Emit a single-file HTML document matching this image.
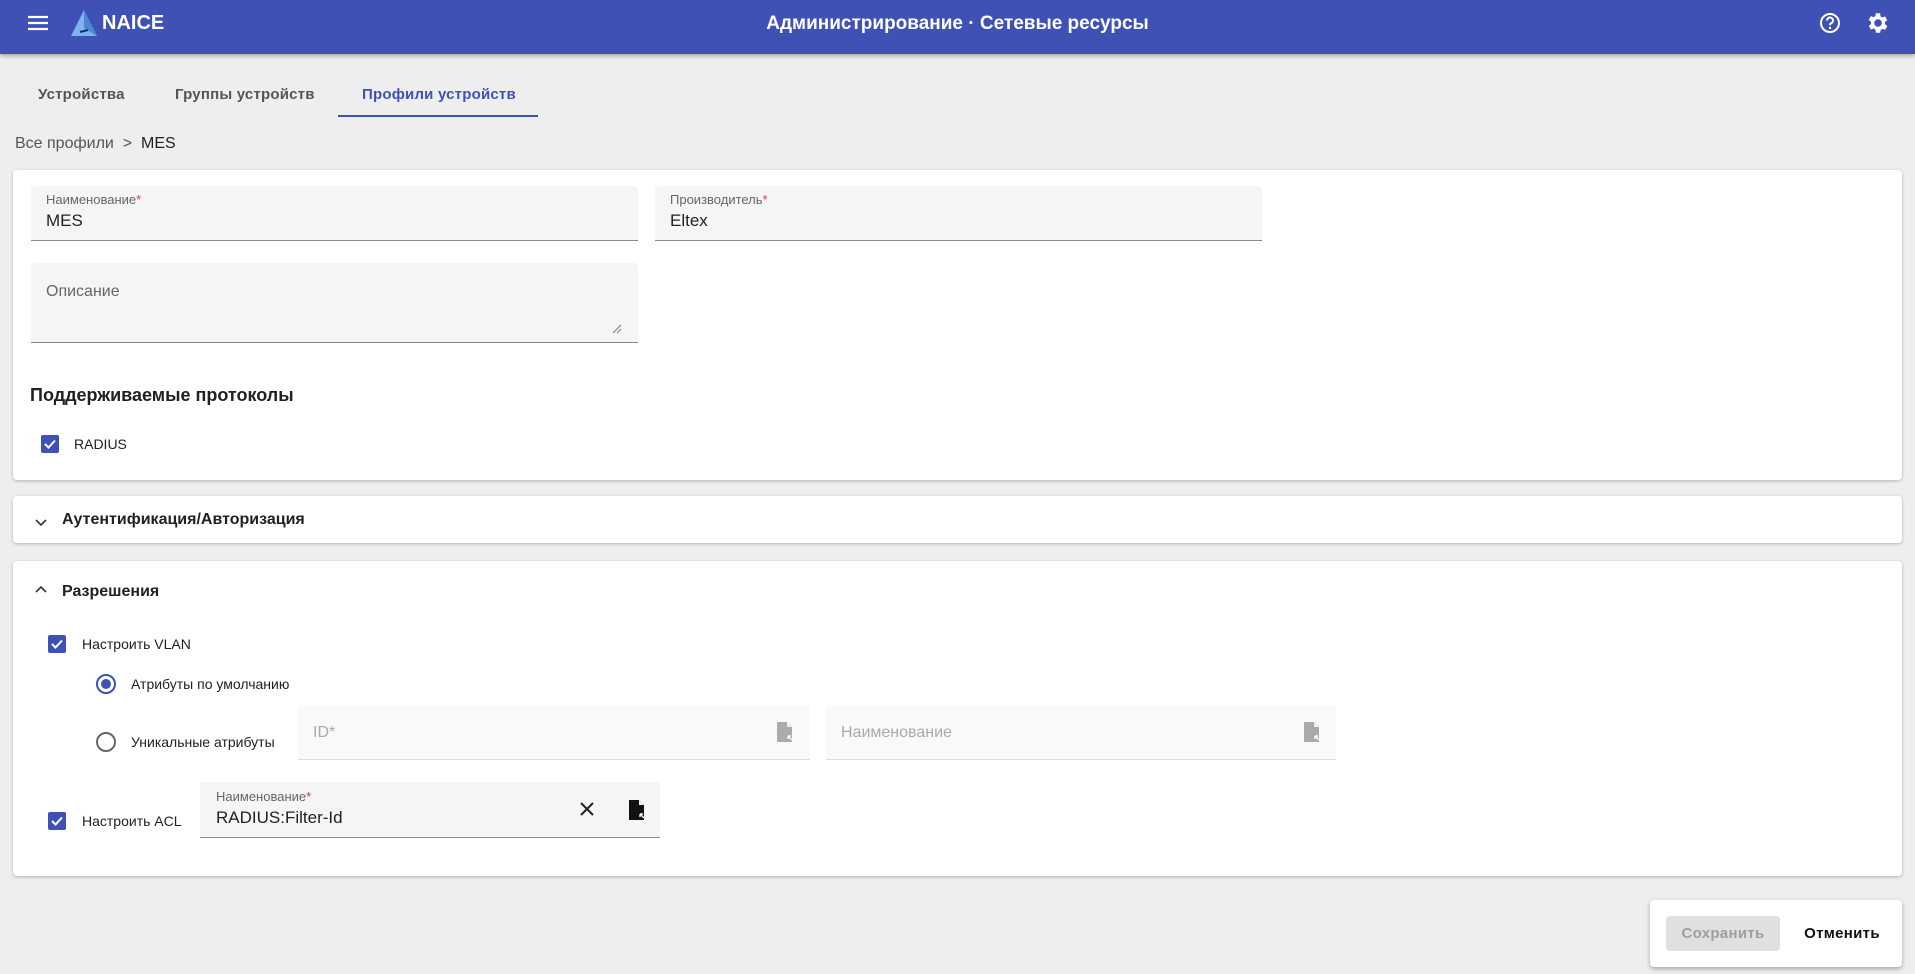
<!DOCTYPE html>
<html><head><meta charset="utf-8"><style>
*{box-sizing:border-box;margin:0;padding:0}
body{width:1915px;height:974px;background:#eeeeee;font-family:"Liberation Sans",sans-serif;color:#212121;position:relative;overflow:hidden}
.a{position:absolute}
.hdr{left:0;top:0;width:1915px;height:54px;background:#3f51b5;box-shadow:0 2px 4px rgba(0,0,0,.3)}
.card{background:#fff;border-radius:4px;box-shadow:0 1px 3px rgba(0,0,0,.25)}
.fld{background:#f5f5f5;border-bottom:1px solid #8a8a8a;border-radius:4px 4px 0 0}
.dis{background:#f9f9f9;border-bottom:1px solid #ddd;border-radius:4px 4px 0 0}
.lbl{font-size:13px;color:#666}
.lbl b{color:#e53935;font-weight:normal}
.val{font-size:17px;color:#212121}
.cb{width:18px;height:18px;background:#3f51b5;border-radius:2px}
.t{font-size:14px;color:#212121}
</style></head><body>
<div class="a hdr"></div>
<svg class="a" style="left:28px;top:15px" width="20" height="16"><path d="M0 2h20M0 8h20M0 14h20" stroke="#fff" stroke-width="2.2"/></svg>
<svg class="a" style="left:70px;top:10px" width="28" height="26"><path d="M14 0L27 26H1Z" fill="#7fb3f0"/><path d="M14 0L14 18L27 26Z" fill="#4a86d8"/><path d="M10 22l8 -2" stroke="#1a2a5a" stroke-width="2"/></svg>
<div class="a" style="left:102px;top:12px;color:#fff;font-size:20px;font-weight:bold">NAICE</div>
<div class="a" style="left:0;width:1915px;top:13px;text-align:center;color:#fff;font-size:19px;font-weight:bold">Администрирование · Сетевые ресурсы</div>
<svg class="a" style="left:1818px;top:11px" width="24" height="24" viewBox="0 0 24 24"><circle cx="12" cy="12" r="9" fill="none" stroke="#fff" stroke-width="2"/><path d="M9 9.5a3 3 0 1 1 4 2.8c-.8.4-1 1-1 2" fill="none" stroke="#fff" stroke-width="2"/><circle cx="12" cy="17" r="1.2" fill="#fff"/></svg>
<svg class="a" style="left:1865px;top:10px" width="26" height="26" viewBox="0 0 24 24"><path fill="#fff" d="M19.4 13a7.5 7.5 0 0 0 0-2l2.1-1.6-2-3.5-2.5 1a7 7 0 0 0-1.7-1L15 3h-4l-.4 2.6a7 7 0 0 0-1.7 1l-2.5-1-2 3.5L6.6 11a7.5 7.5 0 0 0 0 2l-2.1 1.6 2 3.5 2.5-1a7 7 0 0 0 1.7 1L11 21h4l.4-2.6a7 7 0 0 0 1.7-1l2.5 1 2-3.5zM13 15.5a3.5 3.5 0 1 1 0-7 3.5 3.5 0 0 1 0 7z" transform="translate(-1 0)"/></svg>

<div class="a" style="left:38px;top:86px;font-size:15px;color:#555;letter-spacing:.2px;font-weight:bold">Устройства</div>
<div class="a" style="left:175px;top:86px;font-size:15px;color:#555;letter-spacing:.2px;font-weight:bold">Группы устройств</div>
<div class="a" style="left:362px;top:86px;font-size:15px;color:#3f51b5;letter-spacing:.2px;font-weight:bold">Профили устройств</div>
<div class="a" style="left:338px;top:115px;width:200px;height:2px;background:#3f51b5"></div>
<div class="a" style="left:15px;top:135px;font-size:16px;color:#555">Все профили &nbsp;&gt;&nbsp; <span style="color:#212121">MES</span></div>

<div class="a card" style="left:13px;top:170px;width:1889px;height:310px"></div>
<div class="a fld" style="left:31px;top:186px;width:607px;height:55px"></div>
<div class="a lbl" style="left:46px;top:192px">Наименование<b>*</b></div>
<div class="a val" style="left:46px;top:211px">MES</div>
<div class="a fld" style="left:655px;top:186px;width:607px;height:55px"></div>
<div class="a lbl" style="left:670px;top:192px">Производитель<b>*</b></div>
<div class="a val" style="left:670px;top:211px">Eltex</div>
<div class="a fld" style="left:31px;top:263px;width:607px;height:80px"></div>
<div class="a" style="left:46px;top:283px;font-size:16px;color:#666">Описание</div>
<svg class="a" style="left:612px;top:324px" width="10" height="10"><path d="M9 1L1 9M9 5L5 9" stroke="#777"/></svg>
<div class="a" style="left:30px;top:385px;font-size:18px;font-weight:bold">Поддерживаемые протоколы</div>
<div class="a cb" style="left:41px;top:435px"></div>
<svg class="a" style="left:41px;top:435px" width="18" height="18"><path d="M4 9l3.5 3.5L14 5.5" stroke="#fff" stroke-width="2" fill="none"/></svg>
<div class="a t" style="left:74px;top:436px">RADIUS</div>

<div class="a card" style="left:13px;top:496px;width:1889px;height:47px"></div>
<svg class="a" style="left:35px;top:519px" width="12" height="8"><path d="M1 1l5 5 5-5" stroke="#333" stroke-width="1.6" fill="none"/></svg>
<div class="a" style="left:62px;top:511px;font-size:16px;font-weight:bold">Аутентификация/Авторизация</div>

<div class="a card" style="left:13px;top:561px;width:1889px;height:315px"></div>
<svg class="a" style="left:35px;top:585px" width="12" height="8"><path d="M1 7l5-5 5 5" stroke="#333" stroke-width="1.6" fill="none"/></svg>
<div class="a" style="left:62px;top:583px;font-size:16px;font-weight:bold">Разрешения</div>
<div class="a cb" style="left:48px;top:635px"></div>
<svg class="a" style="left:48px;top:635px" width="18" height="18"><path d="M4 9l3.5 3.5L14 5.5" stroke="#fff" stroke-width="2" fill="none"/></svg>
<div class="a t" style="left:82px;top:636px">Настроить VLAN</div>
<svg class="a" style="left:95px;top:673px" width="22" height="22"><circle cx="11" cy="11" r="9" fill="none" stroke="#3f51b5" stroke-width="2"/><circle cx="11" cy="11" r="5" fill="#3f51b5"/></svg>
<div class="a t" style="left:131px;top:676px">Атрибуты по умолчанию</div>
<svg class="a" style="left:95px;top:731px" width="22" height="22"><circle cx="11" cy="11" r="9" fill="none" stroke="#666" stroke-width="2"/></svg>
<div class="a t" style="left:131px;top:734px">Уникальные атрибуты</div>
<div class="a dis" style="left:298px;top:705px;width:512px;height:55px"></div>
<div class="a" style="left:313px;top:724px;font-size:16px;color:#aaa">ID*</div>
<svg class="a" style="left:775px;top:721px" width="20" height="22" viewBox="0 0 20 22"><path d="M2 1h10l5 5v15H2z" fill="#aaa"/><path d="M12 1v5h5" fill="#eee"/><path d="M13 15l4 4M13 15v3M13 15h3" stroke="#f9f9f9" stroke-width="1.4"/></svg>
<div class="a dis" style="left:826px;top:705px;width:510px;height:55px"></div>
<div class="a" style="left:841px;top:724px;font-size:16px;color:#aaa">Наименование</div>
<svg class="a" style="left:1302px;top:721px" width="20" height="22" viewBox="0 0 20 22"><path d="M2 1h10l5 5v15H2z" fill="#aaa"/><path d="M12 1v5h5" fill="#eee"/><path d="M13 15l4 4M13 15v3M13 15h3" stroke="#f9f9f9" stroke-width="1.4"/></svg>
<div class="a cb" style="left:48px;top:812px"></div>
<svg class="a" style="left:48px;top:812px" width="18" height="18"><path d="M4 9l3.5 3.5L14 5.5" stroke="#fff" stroke-width="2" fill="none"/></svg>
<div class="a t" style="left:82px;top:813px">Настроить ACL</div>
<div class="a fld" style="left:200px;top:782px;width:460px;height:56px"></div>
<div class="a lbl" style="left:216px;top:789px">Наименование<b>*</b></div>
<div class="a val" style="left:216px;top:808px">RADIUS:Filter-Id</div>
<svg class="a" style="left:580px;top:802px" width="14" height="14"><path d="M1 1l12 12M13 1L1 13" stroke="#222" stroke-width="2"/></svg>
<svg class="a" style="left:627px;top:799px" width="20" height="22" viewBox="0 0 20 22"><path d="M2 1h10l5 5v15H2z" fill="#111"/><path d="M12 1v5h5" fill="#f5f5f5"/><path d="M13 15l4 4M13 15v3M13 15h3" stroke="#f5f5f5" stroke-width="1.4"/></svg>

<div class="a card" style="left:1650px;top:900px;width:252px;height:67px;box-shadow:0 2px 5px rgba(0,0,0,.3)"></div>
<div class="a" style="left:1666px;top:916px;width:114px;height:35px;background:#e0e0e0;border-radius:4px;color:#9e9e9e;font-size:15px;font-weight:bold;text-align:center;line-height:35px;letter-spacing:.3px">Сохранить</div>
<div class="a" style="left:1795px;top:916px;width:94px;height:35px;color:#111;font-size:15px;font-weight:bold;text-align:center;line-height:35px;letter-spacing:.3px">Отменить</div>
</body></html>
